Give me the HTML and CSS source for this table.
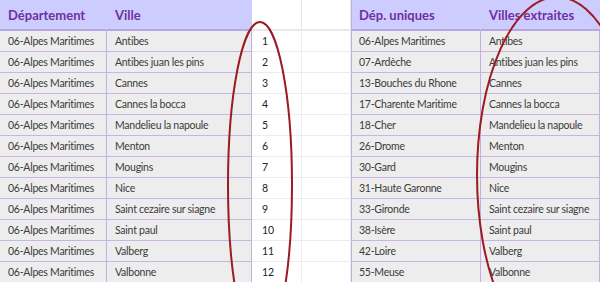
FILE: index.html
```html
<!DOCTYPE html>
<html lang="fr">
<head>
<meta charset="utf-8">
<link rel="stylesheet" href="styles.css">
</head>
<body>
<div class="page">
  <div class="sheet">
    <div class="c hd a">Département</div>
    <div class="c hd b">Ville</div>
    <div class="c hw n"></div>
    <div class="c hw e"></div>
    <div class="c hd a e2">Dép. uniques</div>
    <div class="c hd b">Villes extraites</div>

    <div class="c d a">06-Alpes Maritimes</div><div class="c d b">Antibes</div><div class="c w n">1</div><div class="c w e"></div><div class="c d a e2">06-Alpes Maritimes</div><div class="c d b">Antibes</div>
    <div class="c d a">06-Alpes Maritimes</div><div class="c d b">Antibes juan les pins</div><div class="c w n">2</div><div class="c w e"></div><div class="c d a e2">07-Ardèche</div><div class="c d b">Antibes juan les pins</div>
    <div class="c d a">06-Alpes Maritimes</div><div class="c d b">Cannes</div><div class="c w n">3</div><div class="c w e"></div><div class="c d a e2">13-Bouches du Rhone</div><div class="c d b">Cannes</div>
    <div class="c d a">06-Alpes Maritimes</div><div class="c d b">Cannes la bocca</div><div class="c w n">4</div><div class="c w e"></div><div class="c d a e2">17-Charente Maritime</div><div class="c d b">Cannes la bocca</div>
    <div class="c d a">06-Alpes Maritimes</div><div class="c d b">Mandelieu la napoule</div><div class="c w n">5</div><div class="c w e"></div><div class="c d a e2">18-Cher</div><div class="c d b">Mandelieu la napoule</div>
    <div class="c d a">06-Alpes Maritimes</div><div class="c d b">Menton</div><div class="c w n">6</div><div class="c w e"></div><div class="c d a e2">26-Drome</div><div class="c d b">Menton</div>
    <div class="c d a">06-Alpes Maritimes</div><div class="c d b">Mougins</div><div class="c w n">7</div><div class="c w e"></div><div class="c d a e2">30-Gard</div><div class="c d b">Mougins</div>
    <div class="c d a">06-Alpes Maritimes</div><div class="c d b">Nice</div><div class="c w n">8</div><div class="c w e"></div><div class="c d a e2">31-Haute Garonne</div><div class="c d b">Nice</div>
    <div class="c d a">06-Alpes Maritimes</div><div class="c d b">Saint cezaire sur siagne</div><div class="c w n">9</div><div class="c w e"></div><div class="c d a e2">33-Gironde</div><div class="c d b">Saint cezaire sur siagne</div>
    <div class="c d a">06-Alpes Maritimes</div><div class="c d b">Saint paul</div><div class="c w n">10</div><div class="c w e"></div><div class="c d a e2">38-Isère</div><div class="c d b">Saint paul</div>
    <div class="c d a">06-Alpes Maritimes</div><div class="c d b">Valberg</div><div class="c w n">11</div><div class="c w e"></div><div class="c d a e2">42-Loire</div><div class="c d b">Valberg</div>
    <div class="c d a">06-Alpes Maritimes</div><div class="c d b">Valbonne</div><div class="c w n">12</div><div class="c w e"></div><div class="c d a e2">55-Meuse</div><div class="c d b">Valbonne</div>
  </div>
  <svg class="marks" width="600" height="282" viewBox="0 0 600 282">
    <ellipse cx="260" cy="185" rx="32" ry="163" fill="none" stroke="#9c1a22" stroke-width="2"/>
    <ellipse cx="557" cy="175" rx="80" ry="178" fill="none" stroke="#9c1a22" stroke-width="2"/>
  </svg>
</div>
</body>
</html>
```

FILE: styles.css
```css
html, body {
  margin: 0;
  padding: 0;
  background: #ffffff;
}
.page {
  position: relative;
  width: 600px;
  height: 282px;
  overflow: hidden;
}
.sheet {
  display: grid;
  grid-template-columns: 107px 145px 50px 49px 130px 119px;
  grid-auto-rows: 21px;
  grid-template-rows: 31px;
  font-family: Lato, "Open Sans", sans-serif;
}
.c {
  box-sizing: border-box;
  display: flex;
  align-items: center;
  padding-left: 8px;
  white-space: nowrap;
  overflow: hidden;
}
.hd {
  background: #ccccff;
  color: #7030a0;
  font-weight: bold;
  font-size: 13px;
  border-bottom: 2px solid #b6a6e4;
}
.hd.a { border-right: 1px solid #ccccff; }
.hw {
  background: #ffffff;
  border-bottom: 2px solid #e8e8e8;
  border-right: 1px solid #e8e8e8;
}
.d {
  background: #ededed;
  color: #3b3b3b;
  font-size: 10.5px;
  letter-spacing: -0.25px;
  border-bottom: 1px solid #c9b5e2;
}
.d.a { border-right: 1px solid #c2aee0; }
.d.b { border-right: 1px solid #c2aee0; }
.e2 { border-left: 1px solid #c2aee0; padding-left: 7px; }
.w {
  background: #ffffff;
  color: #222222;
  font-size: 10.5px;
  border-bottom: 1px solid #ececec;
  border-right: 1px solid #ececec;
}
.n { padding-left: 10px; }
.marks {
  position: absolute;
  left: 0;
  top: 0;
  pointer-events: none;
}
```
